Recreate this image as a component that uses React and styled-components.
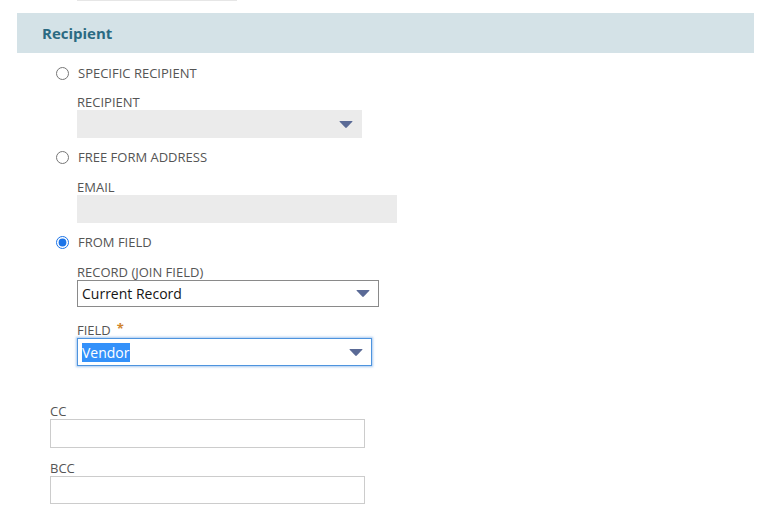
import React from 'react'
import styled, { createGlobalStyle } from 'styled-components'

const GlobalStyle = createGlobalStyle`
  body {
    margin: 0;
    background: #fff;
    font-family: 'Open Sans', 'Noto Sans', sans-serif;
  }
`

const Page = styled.div`
  width: 764px;
  height: 527px;
  overflow: hidden;
`

const TopStub = styled.div`
  margin-left: 77px;
  width: 160px;
  height: 1px;
  background: #e6e6e6;
`

const SectionHeader = styled.div`
  display: flex;
  align-items: center;
  height: 40px;
  margin: 12px 10px 0 17px;
  padding-left: 25px;
  background: #d4e2e7;
  color: #2a6a82;
  font-size: 15px;
  font-weight: 700;
`

const Options = styled.div`
  display: flex;
  flex-direction: column;
  padding: 12px 0 0 56px;
`

const RadioRow = styled.label`
  display: flex;
  align-items: center;
  gap: 9px;
  height: 16px;
  margin-top: ${props => props.$top || 0}px;
  font-size: 13px;
  line-height: 16px;
  color: #555;
  text-transform: uppercase;
`

const Radio = styled.input.attrs({ type: 'radio' })`
  width: 13px;
  height: 13px;
  margin: 0;
  accent-color: #1a73e8;
`

const Field = styled.div`
  display: flex;
  flex-direction: column;
  align-items: flex-start;
  margin-top: ${props => props.$top || 0}px;
  margin-left: ${props => props.$indent || 0}px;
`

const Label = styled.div`
  height: 16px;
  font-size: 13px;
  line-height: 16px;
  color: #555;
  text-transform: uppercase;
`

const Required = styled.span`
  margin-left: 6px;
  color: #d0842c;
  font-weight: 700;
  font-size: 13px;
  line-height: 0;
  vertical-align: 2px;
`

const SelectBox = styled.div`
  box-sizing: border-box;
  display: flex;
  align-items: center;
  justify-content: space-between;
  width: ${props => props.$width}px;
  height: ${props => props.$height || 28}px;
  padding: 0 8px 0 4px;
  background: ${props => (props.$variant === 'disabled' ? '#ebebeb' : '#fff')};
  border: 1px solid
    ${props =>
      props.$variant === 'disabled'
        ? '#ebebeb'
        : props.$variant === 'focused'
        ? '#4d94de'
        : '#8a8a8a'};
  box-shadow: ${props =>
    props.$variant === 'focused' ? '0 0 2px 1px rgba(110, 165, 230, 0.6)' : 'none'};
  font-size: 14px;
  color: #151515;
`

const Selected = styled.span`
  background: #3391fa;
  color: #fff;
`

const TextBox = styled.div`
  box-sizing: border-box;
  width: ${props => props.$width}px;
  height: ${props => props.$height || 28}px;
  background: ${props => (props.$filled ? '#ebebeb' : '#fff')};
  border: 1px solid ${props => (props.$filled ? '#ebebeb' : '#cccccc')};
`

const Extra = styled.div`
  display: flex;
  flex-direction: column;
  padding: 37px 0 0 50px;
`

const Caret = () => (
  <svg width="14" height="9" viewBox="0 0 14 9">
    <path d="M1 1 H13 Q14 1 13.3 1.8 L7.8 7.6 Q7 8.4 6.2 7.6 L0.7 1.8 Q0 1 1 1 Z" fill="#5a6a96" />
  </svg>
)

export default function App() {
  return (
    <Page>
      <GlobalStyle />
      <TopStub />
      <SectionHeader>Recipient</SectionHeader>
      <Options>
        <RadioRow>
          <Radio name="recipient" />
          Specific Recipient
        </RadioRow>
        <Field $top={13} $indent={21}>
          <Label>Recipient</Label>
          <SelectBox $width={285} $variant="disabled">
            <span />
            <Caret />
          </SelectBox>
        </Field>
        <RadioRow $top={11}>
          <Radio name="recipient" />
          Free Form Address
        </RadioRow>
        <Field $top={14} $indent={21}>
          <Label>Email</Label>
          <TextBox $width={320} $filled />
        </Field>
        <RadioRow $top={11}>
          <Radio name="recipient" defaultChecked />
          From Field
        </RadioRow>
        <Field $top={14} $indent={21}>
          <Label>Record (Join Field)</Label>
          <SelectBox $width={302} $height={27}>
            <span>Current Record</span>
            <Caret />
          </SelectBox>
        </Field>
        <Field $top={15} $indent={21}>
          <Label>
            Field<Required>*</Required>
          </Label>
          <SelectBox $width={295} $variant="focused">
            <Selected>Vendor</Selected>
            <Caret />
          </SelectBox>
        </Field>
      </Options>
      <Extra>
        <Field>
          <Label>CC</Label>
          <TextBox $width={315} $height={29} />
        </Field>
        <Field $top={12}>
          <Label>BCC</Label>
          <TextBox $width={315} />
        </Field>
      </Extra>
    </Page>
  )
}
